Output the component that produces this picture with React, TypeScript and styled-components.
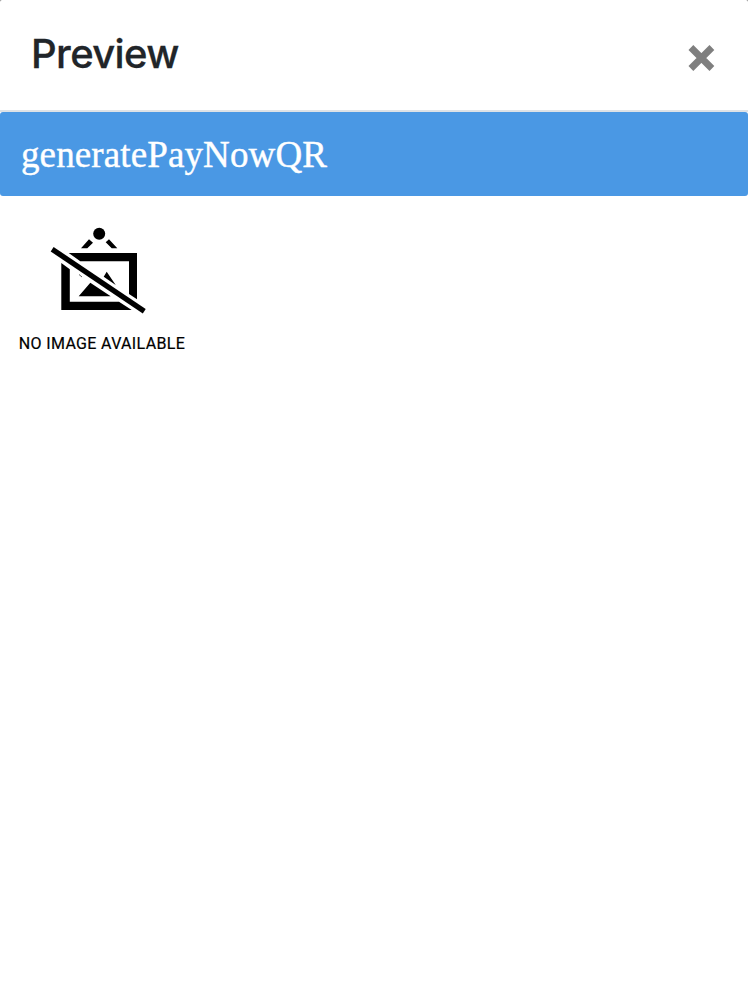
import React from 'react';
import styled, { createGlobalStyle } from 'styled-components';

const GlobalStyle = createGlobalStyle`
  * { box-sizing: border-box; }
  body { margin: 0; background: #7f7f7f; }
`;

const Panel = styled.main`
  min-height: 100vh;
  display: flex;
  flex-direction: column;
  border-radius: 2px 2px 0 0;
  background: #fff;
`;

const Header = styled.header`
  height: 112px;
  padding: 0 32px 0 31px;
  display: flex;
  align-items: flex-start;
  justify-content: space-between;
  border-bottom: 2px solid #dee2e6;
`;

const Title = styled.h1`
  margin: 24px 0 0;
  font: 500 40px/60px Inter, sans-serif;
  letter-spacing: -0.62px;
  -webkit-text-stroke: 0.3px #212529;
  color: #212529;
`;

const CloseButton = styled.button`
  margin: 44px 0 0;
  padding: 0;
  border: 0;
  background: none;
  width: 29px;
  height: 28px;
  color: #7f7f7f;
  svg { display: block; }
`;

const Banner = styled.section`
  height: 84px;
  padding: 1px 21px 0;
  display: flex;
  align-items: center;
  border-radius: 3px;
  background: #4a98e4;
`;

const BannerText = styled.h2`
  margin: 0;
  font: 400 37px/54px "Liberation Serif", serif;
  letter-spacing: 0.12px;
  -webkit-text-stroke: 0.4px #fff;
  color: #fff;
`;

const Placeholder = styled.figure`
  width: 204px;
  margin: 0;
  padding-top: 24px;
  display: flex;
  flex-direction: column;
  align-items: center;
  svg { display: block; }
`;

const Caption = styled.figcaption`
  margin-top: 14px;
  font: 400 16px/20px Roboto, sans-serif;
  letter-spacing: 0.34px;
  -webkit-text-stroke: 0.2px #000;
  white-space: nowrap;
  color: #000;
`;

const CloseIcon = () => (
  <svg width="29" height="28" viewBox="0 0 29 28" aria-hidden="true">
    <path d="M3.9 3.5L24.9 24.5M24.9 3.5L3.9 24.5" stroke="currentColor" strokeWidth="6.8" />
  </svg>
);

const NoImageIcon = () => (
  <svg width="104" height="100" viewBox="0 0 104 100" aria-hidden="true">
    <circle cx="49.2" cy="13.8" r="6" />
    <path d="M31 28.3L39 19.3L43 22.7L37.3 28.3ZM55.7 22.3L59 19.3L67.3 28.3H61.7Z" />
    <path d="M18.7 33H87V79.3L79 74V41.2H30.3ZM11.3 43L19.8 49.2V81.8H69L81.7 90H11.3Z" />
    <path d="M28.7 76.3L40.3 62.7L60.7 76.3ZM53.7 56.7L56.7 51.7L65.7 65Z" />
    <path d="M29 54.5L32 57" stroke="#333" strokeWidth=".8" />
    <path d="M3.6 27L95.7 88.9L92.8 93.4L.7 31.5Z" />
  </svg>
);

export default function App() {
  return (
    <>
      <GlobalStyle />
      <Panel>
        <Header>
          <Title>Preview</Title>
          <CloseButton aria-label="Close"><CloseIcon /></CloseButton>
        </Header>
        <Banner><BannerText>generatePayNowQR</BannerText></Banner>
        <Placeholder>
          <NoImageIcon />
          <Caption>NO IMAGE AVAILABLE</Caption>
        </Placeholder>
      </Panel>
    </>
  );
}
